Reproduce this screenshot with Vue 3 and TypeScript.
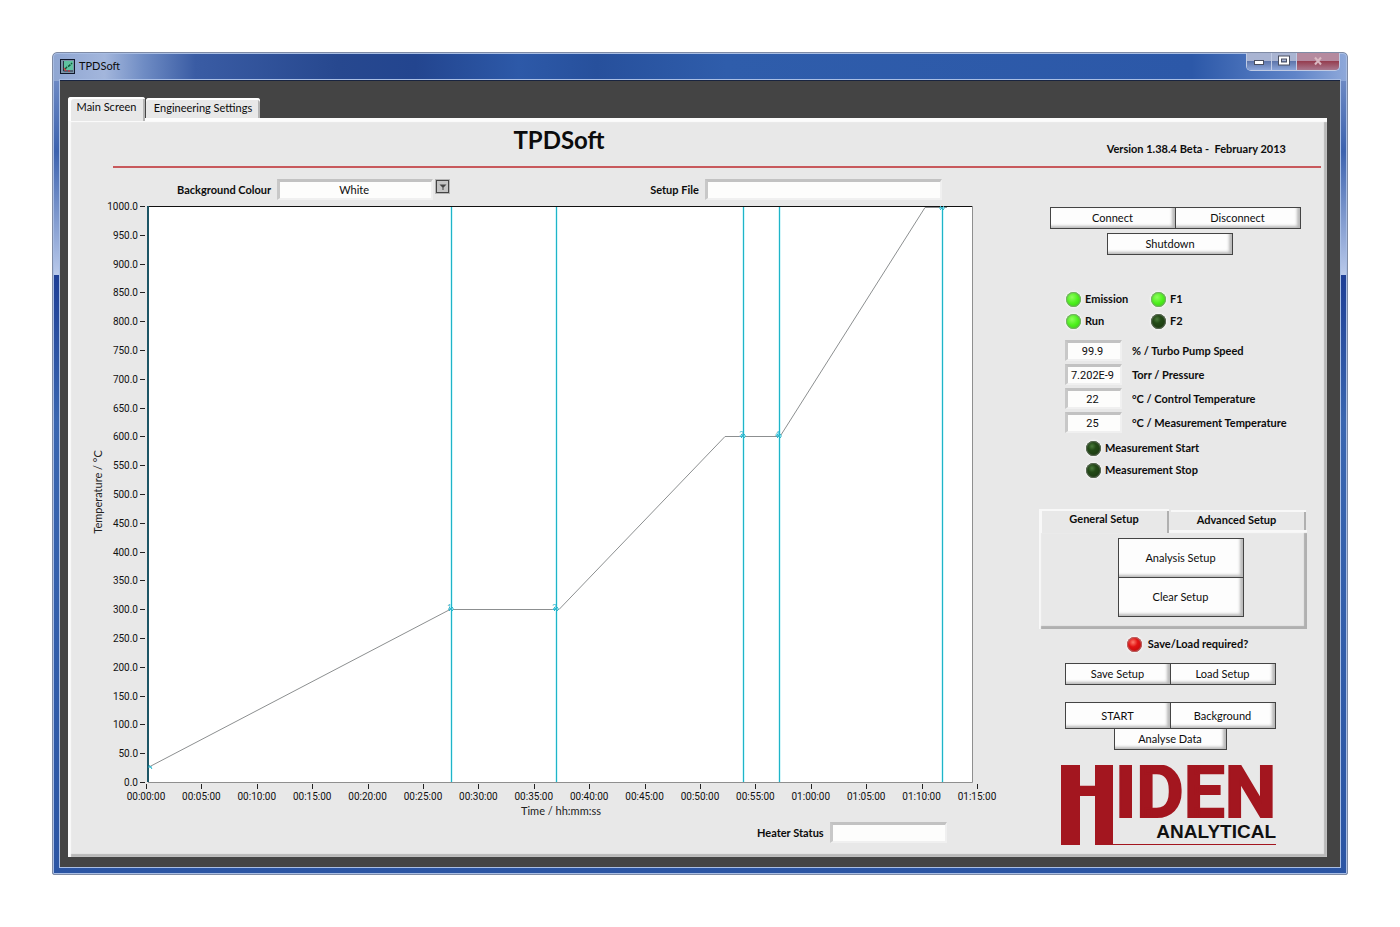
<script setup lang="ts">
interface Marker {
  id: number
  x: number
  y: number
}

const yTicks = Array.from({ length: 21 }, (_, i) => {
  const value = 1000 - i * 50
  return { label: value.toFixed(1), y: 582 - value * 0.576 }
})

const xTicks = Array.from({ length: 16 }, (_, i) => {
  const minutes = i * 5
  const hh = String(Math.floor(minutes / 60)).padStart(2, '0')
  const mm = String(minutes % 60).padStart(2, '0')
  return { label: `${hh}:${mm}:00`, x: 59 + i * 55.4 }
})

const markers: Marker[] = [
  { id: 1, x: 363, y: 409 },
  { id: 2, x: 468, y: 409 },
  { id: 3, x: 655, y: 236 },
  { id: 4, x: 691, y: 236 },
  { id: 5, x: 854, y: 8 },
]

const readouts = [
  { id: 'turbo', value: '99.9', label: '% / Turbo Pump Speed' },
  { id: 'pressure', value: '7.202E-9', label: 'Torr / Pressure' },
  { id: 'control', value: '22', label: '°C / Control Temperature' },
  { id: 'measure', value: '25', label: '°C / Measurement Temperature' },
]
</script>

<template>
  <div class="desktop">
    <div class="window">
      <header class="titlebar">
        <svg class="app-icon" viewBox="0 0 15 15" aria-hidden="true">
          <rect x="0.5" y="0.5" width="14" height="14" fill="#7b93a8" stroke="#10182a" />
          <rect x="4" y="2" width="9" height="9" fill="#5fc2a0" />
          <path d="M3.5 2v10h9.500" fill="none" stroke="#2a3444" />
          <path d="M5 10l2-2 2-1 3-3" fill="none" stroke="#0c5a38" stroke-width="1.500" stroke-dasharray="3 1" />
          <path d="M4 9l2 3M8 12h2" stroke="#d33" stroke-width="1.200" />
        </svg>
        <span class="caption">TPDSoft</span>
        <div class="window-buttons">
          <button type="button" aria-label="Minimize">
            <svg viewBox="0 0 14 12"><rect x="2.500" y="5.500" width="9" height="4" fill="#fff" stroke="#4a4f60" /></svg>
          </button>
          <button type="button" aria-label="Maximize">
            <svg viewBox="0 0 14 12"><rect x="3" y="2.500" width="8" height="6" fill="none" stroke="#4a4f60" stroke-width="4" /><rect x="3" y="2.500" width="8" height="6" fill="none" stroke="#fff" stroke-width="2" /></svg>
          </button>
          <button type="button" class="close" aria-label="Close">
            <svg viewBox="0 0 14 12"><path d="M4 2.500l6 7M10 2.500l-6 7" stroke="#d9b9c2" stroke-width="2" /></svg>
          </button>
        </div>
      </header>

      <main class="client">
        <nav class="tabs">
          <button type="button" class="tab active">Main Screen</button>
          <button type="button" class="tab">Engineering Settings</button>
        </nav>

        <section class="panel">
          <div class="heading">
            <h1>TPDSoft</h1>
            <p>Version 1.38.4 Beta -&nbsp; February 2013</p>
          </div>

          <div class="body">
            <div class="chart-column">
              <div class="fields">
                <div class="field">
                  <label for="colour">Background Colour</label>
                  <select id="colour" class="sunken colour">
                    <option>White</option>
                  </select>
                  <button type="button" class="drop" aria-label="Open colour list">
                    <svg viewBox="0 0 8 8"><path d="M0.500 1.500h7L4.500 4.500V7h-1V4.500z" fill="#444" /></svg>
                  </button>
                </div>
                <div class="field">
                  <label for="file">Setup File</label>
                  <input id="file" type="text" class="sunken file" />
                </div>
              </div>

              <svg class="chart" viewBox="0 0 951 620" role="img" aria-label="Temperature against time">
                <rect x="60" y="6" width="824" height="576" fill="#fff" />
                <path d="M60 6.500H884" stroke="#111" />
                <path d="M884.500 6V582.500H60" fill="none" stroke="#8f8f8f" />
                <path d="M60 6V582" stroke="#1d5565" stroke-width="2" />
                <polyline
                  points="61,567 362,409.500 471,409.500 637,236.500 692,236.500 837,7.500 859,7.500"
                  fill="none"
                  stroke="#8c8f90"
                />
                <g v-for="m in markers" :key="m.id" class="marker">
                  <rect class="glow" :x="m.x - 1" y="7" width="3" height="575" />
                  <rect :x="m.x" y="7" width="1" height="575" />
                  <path :d="`M${m.x - 3} ${m.y}h6M${m.x - 2} ${m.y - 2}l4 4M${m.x + 2} ${m.y - 2}l-4 4`" />
                  <text v-if="m.id < 5" :x="m.x - 4" :y="m.y + 1">{{ m.id }}</text>
                </g>
                <path d="M60 567h4M61 565l3 4" stroke="#2fb9cf" />
                <g v-for="t in yTicks" :key="t.label">
                  <path :d="`M52 ${Math.round(t.y) + 0.5}h5`" stroke="#222" />
                  <text class="tick" x="50" :y="Math.round(t.y) + 4" text-anchor="end">{{ t.label }}</text>
                </g>
                <g v-for="t in xTicks" :key="t.label">
                  <path :d="`M${Math.round(t.x) - 0.5} 584v5`" stroke="#222" />
                  <text class="tick" :x="t.x - 1" y="600" text-anchor="middle">{{ t.label }}</text>
                </g>
                <text class="axis" x="473" y="615" text-anchor="middle">Time / hh:mm:ss</text>
                <text class="axis" transform="translate(14 292) rotate(-90)" text-anchor="middle">Temperature / °C</text>
              </svg>

              <div class="field heater">
                <label for="heater">Heater Status</label>
                <input id="heater" type="text" class="sunken heater-box" />
              </div>
            </div>

            <aside class="side">
              <div class="row connect">
                <button type="button" class="push">Connect</button>
                <button type="button" class="push">Disconnect</button>
              </div>
              <button type="button" class="push shutdown">Shutdown</button>

              <div class="leds">
                <span class="led-item"><i class="led on"></i>Emission</span>
                <span class="led-item"><i class="led on"></i>F1</span>
                <span class="led-item"><i class="led on"></i>Run</span>
                <span class="led-item"><i class="led"></i>F2</span>
              </div>

              <div class="readouts">
                <div v-for="r in readouts" :key="r.id" class="readout">
                  <input :id="r.id" type="text" class="sunken" :value="r.value" readonly />
                  <label :for="r.id">{{ r.label }}</label>
                </div>
              </div>

              <div class="measure">
                <span class="led-item"><i class="led"></i>Measurement Start</span>
                <span class="led-item"><i class="led"></i>Measurement Stop</span>
              </div>

              <div class="setup">
                <div class="setup-tabs">
                  <button type="button" class="setup-tab active">General Setup</button>
                  <button type="button" class="setup-tab">Advanced Setup</button>
                </div>
                <div class="setup-page">
                  <button type="button" class="push">Analysis Setup</button>
                  <button type="button" class="push">Clear Setup</button>
                </div>
              </div>

              <span class="led-item required"><i class="led red"></i>Save/Load required?</span>

              <div class="row pair">
                <button type="button" class="push">Save Setup</button>
                <button type="button" class="push">Load Setup</button>
              </div>
              <div class="row pair run">
                <button type="button" class="push">START</button>
                <button type="button" class="push">Background</button>
              </div>
              <button type="button" class="push analyse">Analyse Data</button>

              <svg class="logo" viewBox="0 0 216 82" role="img" aria-label="Hiden Analytical">
                <text class="brand" y="52"><tspan x="0">H</tspan><tspan x="54">IDEN</tspan></text>
                <rect x="0" y="0" width="19" height="80" fill="#a3161f" />
                <rect x="34" y="0" width="18" height="80" fill="#a3161f" />
                <text class="sub" x="215" y="73" text-anchor="end">ANALYTICAL</text>
                <path d="M50 79.500H215" stroke="#a3161f" />
              </svg>
            </aside>
          </div>
        </section>
      </main>
    </div>
  </div>
</template>

<style>
body {
  margin: 0;
  background: #fff;
}
</style>

<style scoped>
* {
  box-sizing: border-box;
}

.desktop {
  min-height: 100vh;
  padding: 52px;
  font: 11px/16px Lato, "Open Sans", sans-serif;
  color: #0c0c0c;
}

button,
input,
select {
  font: inherit;
  color: inherit;
  margin: 0;
  padding: 0;
}

.window {
  padding: 0 7px 7px;
  border: 1px solid #7f8ba5;
  border-radius: 5px 5px 2px 2px;
  background:
    linear-gradient(90deg, #8fa6d2 0, #a3b6dc 4%, #6f8cc4 7%, #3a5ca4 11%, #27488f 22%, #23458f 28%, #2d59a8 36%, #27509c 42%, #2f5dab 52%, #2c58a8 88%, #5f84c8 96%, #8fa9da 100%) top / 100% 28px no-repeat,
    linear-gradient(#7f98cc 0, #3c62ae 12%, #b9c9ea 27%, #1e3f96 27%, #3a66b0 45%, #2b55a4 100%);
  box-shadow: inset 0 0 0 1px #a9bee4;
}

.titlebar {
  display: flex;
  height: 27px;
  align-items: center;
  gap: 4px;
}

.app-icon {
  width: 15px;
  height: 15px;
}

.caption {
  padding-bottom: 2px;
}

.window-buttons {
  display: flex;
  align-self: flex-start;
  margin-left: auto;
  border: 1px solid #c0cbe4;
  border-top: 0;
  border-radius: 0 0 5px 5px;
  overflow: hidden;
}

.window-buttons button {
  display: grid;
  place-items: center;
  width: 25px;
  height: 17px;
  border: 0;
  border-right: 1px solid #c0cbe4;
  background: linear-gradient(#a9b4d2 0 45%, #5e76ac 50%, #8ba5d8);
}

.window-buttons svg {
  width: 14px;
  height: 12px;
  margin-bottom: 2px;
}

.window-buttons .close {
  width: 42px;
  border-right: 0;
  background: linear-gradient(#b58a9f 0 45%, #963f51 50%, #a8798f);
}

.client {
  padding: 16px 13px 10px 8px;
  background: #444;
  box-shadow: 0 0 0 1px #a9bee4;
  border-top: 1px solid #182440;
}

.tabs {
  display: flex;
  height: 21px;
  align-items: flex-end;
  gap: 1px;
}

.tab {
  height: 20px;
  width: 114px;
  border: 0;
  border-radius: 3px 3px 0 0;
  background: #e8e8e8;
  box-shadow: inset 0 2px #fff, inset -2px 0 #b4b4b4;
}

.tab.active {
  position: relative;
  height: 24px;
  width: 77px;
  margin-bottom: -3px;
  padding-bottom: 5px;
  box-shadow: inset 3px 2px #fff, inset -2px 0 #b4b4b4;
}

.panel {
  background: #e8e8e8;
  box-shadow: inset 3px 0 1px #fafafa, inset 0 4px 1px #fcfcfc, inset -3px -3px 1px #b8b8b8;
}

.heading {
  display: grid;
  grid-template-columns: 1fr auto 1fr;
  align-items: center;
  height: 50px;
  margin: 0 6px 0 45px;
  border-bottom: 2px solid #c8595c;
}

.heading h1 {
  grid-column: 1 / 4;
  grid-row: 1;
  margin: 0 316px 4px 0;
  text-align: center;
  font: 700 24px/32px Lato, sans-serif;
}

.heading p {
  grid-column: 3;
  grid-row: 1;
  justify-self: end;
  margin: 14px 35px 0 0;
  font-weight: 700;
}

.body {
  display: grid;
  grid-template-columns: minmax(0, 1fr) 268px;
  padding: 11px 20px 10px;
}

.fields {
  display: flex;
  gap: 201px;
  height: 21px;
  padding-left: 89px;
}

.field {
  display: flex;
  align-items: center;
  gap: 6px;
}

label,
.led-item {
  font-weight: 700;
  white-space: nowrap;
}

.sunken {
  height: 21px;
  border: solid;
  border-width: 3px 2px 2px 3px;
  border-color: #c2c2c2 #f0f0f0 #f0f0f0 #c8c8c8;
  border-radius: 0;
  background: #fdfdfc;
  text-align: center;
}

.colour {
  appearance: none;
  width: 156px;
  padding-right: 3px;
  text-align-last: center;
}

.drop {
  display: grid;
  place-items: center;
  align-self: flex-start;
  width: 13px;
  height: 13px;
  margin: 1px 0 0 -3px;
  border: 1px solid #444;
  outline: 1px solid #b4b4b4;
  background: #c4c4c4;
}

.drop svg {
  width: 8px;
  height: 8px;
}

.file {
  width: 237px;
}

.chart {
  display: block;
  width: 100%;
}

.marker rect {
  fill: #1fb4c8;
}

.marker .glow {
  fill: #d4f6fa;
}

.marker path {
  fill: none;
  stroke: #2fb9cf;
}

.marker text {
  font-size: 8px;
  fill: #2fb9cf;
}

.tick {
  font: 10px Roboto, sans-serif;
  fill: #111;
}

.axis {
  font-size: 11px;
  fill: #222;
}

.heater {
  margin: 2px 0 0 669px;
}

.heater-box {
  width: 117px;
}

.side {
  display: flex;
  flex-direction: column;
  align-items: center;
  padding-top: 28px;
}

.row {
  display: flex;
}

.push {
  width: 126px;
  height: 22px;
  border: 1px solid #444;
  border-radius: 0;
  background: #fdfdfd;
  box-shadow: inset -3px -2px 3px #b9b9b9;
}

.push + .push {
  margin-left: -1px;
}

.connect {
  margin-left: 4px;
}

.shutdown {
  margin-top: 4px;
  margin-right: 6px;
}

.leds {
  display: grid;
  grid-template-columns: 85px 85px;
  row-gap: 6px;
  align-self: flex-start;
  margin: 36px 0 0 27px;
}

.led-item {
  display: flex;
  align-items: center;
  gap: 4px;
}

.led {
  width: 15px;
  height: 15px;
  border-radius: 50%;
  background: radial-gradient(circle at 40% 35%, #4a7a3c 0, #234a17 30%, #16300d 100%);
  box-shadow: 0 0 2px 1px #f6f6f6, inset 0 0 1px 1px #5d6a58;
}

.led.on {
  background: radial-gradient(circle at 40% 35%, #8dff5c 0, #4df01d 45%, #2fc40c 100%);
  box-shadow: 0 0 2px 1px #f6f6f6, inset 0 0 1px 1px #79a56c;
}

.led.red {
  background: radial-gradient(circle at 40% 35%, #ff7a6a 0, #e21313 35%, #b00505 100%);
  box-shadow: 0 0 2px 1px #f6f6f6, inset 0 0 1px 1px #b26a6a;
}

.readouts {
  display: flex;
  flex-direction: column;
  gap: 3px;
  align-self: flex-start;
  margin: 11px 0 0 26px;
}

.readout {
  display: flex;
  align-items: center;
  gap: 10px;
}

.readout input {
  width: 57px;
  padding-right: 3px;
  font-family: Roboto, sans-serif;
}

.measure {
  display: flex;
  flex-direction: column;
  gap: 6px;
  align-self: flex-start;
  margin: 7px 0 0 47px;
}

.setup {
  align-self: stretch;
  margin-top: 31px;
}

.setup-tabs {
  display: flex;
  align-items: flex-end;
  height: 21px;
  gap: 2px;
}

.setup-tab {
  height: 20px;
  width: 135px;
  padding-right: 4px;
  border: 0;
  background: #e8e8e8;
  font-weight: 700;
  box-shadow: inset 0 2px #f8f8f8, inset -2px 0 #b0b0b0;
}

.setup-tab.active {
  position: relative;
  width: 130px;
  height: 24px;
  margin-bottom: -3px;
  padding-right: 0;
  padding-bottom: 4px;
  box-shadow: inset 3px 2px #f8f8f8, inset -2px 0 #b0b0b0;
}

.setup-page {
  display: flex;
  flex-direction: column;
  align-items: center;
  padding: 8px 0 12px 15px;
  box-shadow: inset 2px 3px 1px #f8f8f8, inset -3px -3px 1px #b0b0b0;
}

.setup-page .push {
  height: 40px;
  margin: 0;
}

.setup-page .push + .push {
  margin-top: -1px;
}

.required {
  gap: 6px;
  margin: 7px 0 11px 29px;
}

.pair {
  margin-left: -6px;
}

.pair .push {
  width: 106px;
}

.run {
  margin-top: 17px;
}

.run .push {
  height: 27px;
}

.analyse {
  width: 113px;
  margin: -1px 6px 0 0;
}

.logo {
  width: 216px;
  margin: 15px 8px 0 0;
}

.brand {
  font: 700 73px Roboto, sans-serif;
  fill: #a3161f;
  stroke: #a3161f;
  stroke-width: 2px;
}

.sub {
  font: 700 19px "Liberation Sans", sans-serif;
  fill: #111;
}
</style>
